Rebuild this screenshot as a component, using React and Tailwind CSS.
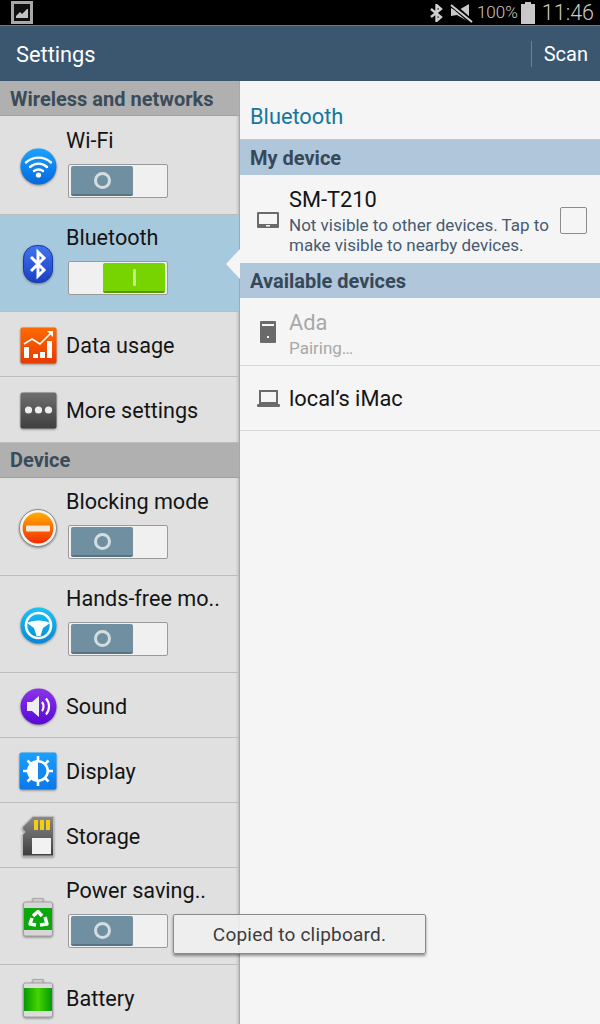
import React from 'react';

const Toggle = ({ on }) => (
  <div className="relative flex h-[34px] w-[100px] items-center rounded-[2px] border border-[#9a9a9a] bg-[#f0f0f0] p-[1px]">
    {on ? (
      <div className="ml-auto mr-[1px] flex h-[30px] w-[62px] items-center justify-center rounded-[2px] border-b-2 border-[#5c9400] bg-[#78d400]">
        <div className="h-[17px] w-[3px] rounded-[1px] bg-[#c4e88a]" />
      </div>
    ) : (
      <div className="ml-[1px] flex h-[30px] w-[62px] items-center justify-center rounded-[2px] border-b-2 border-[#587484] bg-[#7090a2]">
        <div className="h-[17px] w-[17px] rounded-full border-[3px] border-[#d4dde0]" />
      </div>
    )}
  </div>
);

const WifiIcon = () => (
  <svg width="37" height="37" viewBox="0 0 37 37">
    <defs>
      <linearGradient id="wifiBg" x1="0" y1="0" x2="0" y2="1">
        <stop offset="0" stopColor="#1aa3ff" />
        <stop offset="1" stopColor="#0568dc" />
      </linearGradient>
    </defs>
    <circle cx="18.5" cy="18.5" r="18" fill="url(#wifiBg)" />
    <g fill="none" stroke="#fff" strokeWidth="2.4" strokeLinecap="round">
      <path d="M6 14.5 C13 8 24 8 31 14.5" />
      <path d="M10 19 C15 14.5 22 14.5 27 19" />
      <path d="M14 23 C16.5 21 20.5 21 23 23" />
    </g>
    <circle cx="18.5" cy="27" r="2.6" fill="#fff" />
  </svg>
);

const BluetoothIcon = () => (
  <svg width="30" height="38" viewBox="0 0 30 38">
    <defs>
      <linearGradient id="btBg" x1="0" y1="0" x2="0" y2="1">
        <stop offset="0" stopColor="#3f74f0" />
        <stop offset="1" stopColor="#1c3fc4" />
      </linearGradient>
    </defs>
    <rect x="0.5" y="0.5" width="29" height="37" rx="13" fill="url(#btBg)" stroke="#1a3aa8" />
    <path d="M8 12 L21 25 L15 31 L15 7 L21 13 L8 26" fill="none" stroke="#fff" strokeWidth="3" />
  </svg>
);

const DataIcon = () => (
  <svg width="37" height="37" viewBox="0 0 37 37">
    <defs>
      <linearGradient id="dataBg" x1="0" y1="0" x2="0" y2="1">
        <stop offset="0" stopColor="#ff6a00" />
        <stop offset="1" stopColor="#e83a00" />
      </linearGradient>
    </defs>
    <rect x="0.5" y="0.5" width="36" height="36" rx="2" fill="url(#dataBg)" />
    <path d="M4 17 L12 12 L20 17 L31 6" fill="none" stroke="#fff" strokeWidth="1.6" />
    <path d="M27 4 L33 4 L33 10 Z" fill="#fff" />
    <rect x="4" y="20" width="5" height="11" fill="#fff" />
    <rect x="13" y="27" width="5" height="4" fill="#fff" />
    <rect x="20" y="25" width="5" height="6" fill="#fff" />
    <rect x="27" y="14" width="5" height="17" fill="#fff" />
  </svg>
);

const MoreIcon = () => (
  <svg width="37" height="37" viewBox="0 0 37 37">
    <defs>
      <linearGradient id="moreBg" x1="0" y1="0" x2="0" y2="1">
        <stop offset="0" stopColor="#6e6e6e" />
        <stop offset="1" stopColor="#404040" />
      </linearGradient>
    </defs>
    <rect x="0.5" y="0.5" width="36" height="36" rx="2" fill="url(#moreBg)" />
    <circle cx="8.5" cy="18" r="3.6" fill="#eee" />
    <circle cx="18.5" cy="18" r="3.6" fill="#eee" />
    <circle cx="28.5" cy="18" r="3.6" fill="#eee" />
  </svg>
);

const BlockIcon = () => (
  <svg width="38" height="38" viewBox="0 0 38 38">
    <defs>
      <linearGradient id="blockBg" x1="0" y1="0" x2="0" y2="1">
        <stop offset="0" stopColor="#ffb000" />
        <stop offset="1" stopColor="#f52a00" />
      </linearGradient>
    </defs>
    <circle cx="19" cy="19" r="18.5" fill="#f4f4f4" stroke="#8a8a8a" />
    <circle cx="19" cy="19" r="15.500" fill="url(#blockBg)" />
    <rect x="7" y="16.500" width="24" height="6" rx="1" fill="#f4e8d8" />
  </svg>
);

const WheelIcon = () => (
  <svg width="37" height="37" viewBox="0 0 37 37">
    <defs>
      <linearGradient id="wheelBg" x1="0" y1="0" x2="0" y2="1">
        <stop offset="0" stopColor="#1cc4f4" />
        <stop offset="1" stopColor="#0488d8" />
      </linearGradient>
    </defs>
    <circle cx="18.5" cy="18.5" r="18" fill="url(#wheelBg)" />
    <circle cx="18.5" cy="18.5" r="12.500" fill="none" stroke="#fff" strokeWidth="2.6" />
    <path d="M7 16 C12 12.500 25 12.500 30 16 L23 21 L20.500 29 L16.500 29 L14 21 Z" fill="#fff" />
  </svg>
);

const SoundIcon = () => (
  <svg width="37" height="37" viewBox="0 0 37 37">
    <defs>
      <linearGradient id="soundBg" x1="0" y1="0" x2="0" y2="1">
        <stop offset="0" stopColor="#8a34e8" />
        <stop offset="1" stopColor="#5a08d8" />
      </linearGradient>
    </defs>
    <circle cx="18.5" cy="18.5" r="18" fill="url(#soundBg)" />
    <path d="M7 14 L12 14 L19 8 L19 29 L12 23 L7 23 Z" fill="#eee" />
    <path d="M22 14 C24 16.500 24 20.500 22 23" fill="none" stroke="#fff" strokeWidth="2.2" />
    <path d="M26 10.500 C30 15 30 22 26 26.500" fill="none" stroke="#fff" strokeWidth="2.2" />
  </svg>
);

const DisplayIcon = () => (
  <svg width="38" height="38" viewBox="0 0 38 38">
    <defs>
      <linearGradient id="dispBg" x1="0" y1="0" x2="0" y2="1">
        <stop offset="0" stopColor="#1aa0ff" />
        <stop offset="1" stopColor="#0a78e8" />
      </linearGradient>
    </defs>
    <rect x="0.5" y="0.5" width="37" height="37" rx="2" fill="url(#dispBg)" />
    <g stroke="#fff" strokeWidth="2.6">
      <path d="M19 4 V34 M4 19 H34 M8.500 8.500 L29.500 29.500 M29.500 8.500 L8.500 29.500" />
    </g>
    <circle cx="19" cy="19" r="11" fill="#fff" />
    <path d="M19 10.500 A8.500 8.500 0 0 1 19 27.500 Z" fill="#1488f0" />
  </svg>
);

const StorageIcon = () => (
  <svg width="34" height="41" viewBox="0 0 34 41">
    <defs>
      <linearGradient id="storeBg" x1="0" y1="0" x2="0" y2="1">
        <stop offset="0" stopColor="#8a8a8a" />
        <stop offset="1" stopColor="#3e3e3e" />
      </linearGradient>
    </defs>
    <path d="M12 0.500 L32.500 0.500 L32.500 40 L1.500 40 L1.500 19 L4 16 L1.500 13 L1.500 11 Z" fill="url(#storeBg)" stroke="#bbb" />
    <rect x="13" y="4" width="4" height="10" fill="#f4cc10" />
    <rect x="19" y="4" width="4" height="10" fill="#f4cc10" />
    <rect x="25" y="4" width="4" height="10" fill="#f4cc10" />
    <rect x="11" y="22" width="19" height="16" fill="#f2f2f2" />
  </svg>
);

const PowerIcon = () => (
  <svg width="30" height="39" viewBox="0 0 30 39">
    <rect x="10" y="0.500" width="10" height="4" fill="#ccc" stroke="#aaa" />
    <rect x="0.5" y="4" width="29" height="34" rx="2" fill="#d6d6d6" stroke="#a0a0a0" />
    <rect x="1" y="10" width="28" height="22" fill="#0aa80a" />
    <g fill="none" stroke="#fff" strokeWidth="3.4" strokeLinejoin="round">
      <path d="M10 18 L15 13.500 L19 18" />
      <path d="M22 19 L24 26 L17 27" />
      <path d="M13 27 L7 26 L9 20" />
    </g>
  </svg>
);

const BatteryIcon = () => (
  <svg width="30" height="39" viewBox="0 0 30 39">
    <defs>
      <linearGradient id="batBg" x1="0" y1="0" x2="1" y2="0">
        <stop offset="0" stopColor="#059a05" />
        <stop offset="0.5" stopColor="#44d400" />
        <stop offset="1" stopColor="#059a05" />
      </linearGradient>
    </defs>
    <rect x="10" y="0.500" width="10" height="4" fill="#ccc" stroke="#aaa" />
    <rect x="0.5" y="4" width="29" height="34" rx="2" fill="#dcdcdc" stroke="#a0a0a0" />
    <rect x="1" y="9" width="28" height="23" fill="url(#batBg)" />
  </svg>
);

const Row = ({ icon, label, height, toggle, on, active, top = '12px', textTop = '4px' }) => (
  <div
    className={`relative flex shrink-0 border-b border-[#bcbcbc] ${toggle ? 'items-start' : 'items-center'} ${active ? 'bg-[#a7c9dd]' : ''}`}
    style={{ height }}
  >
    <div className="flex h-full w-[66px] shrink-0 items-center justify-center pl-[10px] pt-[2px] drop-shadow-[0_1px_1px_rgba(0,0,0,0.4)]">
      {icon}
    </div>
    {toggle ? (
      <div className="flex flex-col" style={{ paddingTop: top }}>
        <span className="text-[21.6px] leading-[26px] text-[#141414]">{label}</span>
        <div className="ml-[2px] mt-[10px]">
          <Toggle on={on} />
        </div>
      </div>
    ) : (
      <span className="text-[21.6px] leading-none text-[#141414]" style={{ paddingTop: textTop }}>
        {label}
      </span>
    )}
  </div>
);

const SideHeader = ({ children, h, textTop = '2px' }) => (
  <div
    className="flex shrink-0 items-center border-b border-[#a0a0a0] bg-[#b0b0b0] pl-[10px] text-[20px] font-bold text-[#3a4c59]"
    style={{ height: h, paddingTop: textTop }}
  >
    {children}
  </div>
);

const BlueHeader = ({ children, h }) => (
  <div
    className="flex shrink-0 items-center bg-[#b0c6da] pl-[10px] text-[20px] font-bold text-[#36495a]"
    style={{ height: h }}
  >
    {children}
  </div>
);

export default function App() {
  return (
    <div className="relative flex h-[1024px] w-[600px] flex-col overflow-hidden bg-[#f5f5f5] font-['Roboto',sans-serif]">
      {/* status bar */}
      <div className="flex h-[25px] shrink-0 items-center bg-black text-[#c8c8c8]">
        <div className="ml-[11px] flex h-[23px] w-[22px] items-end justify-center border-[3px] border-[#a8a8a8] bg-[#111] pb-[3px]">
          <svg width="12" height="9" viewBox="0 0 12 9">
            <path d="M0 9 L0 7 L4 3 L6 5 L11 0 L12 0 L12 9 Z" fill="#c4c4c4" />
          </svg>
        </div>
        <div className="ml-auto flex items-center">
          <svg width="13" height="18" viewBox="0 0 13 18">
            <path d="M1 5 L11 13 L6.500 17 L6.500 1 L11 5 L1 13" fill="none" stroke="#d0d0d0" strokeWidth="2.4" />
          </svg>
          <svg className="ml-[7px]" width="23" height="20" viewBox="0 0 23 20">
            <path d="M1 5 L7 8 L19 1 L19 19 L7 12 L1 13 Z" fill="#c8c8c8" />
            <path d="M0 0 L23 20" stroke="#000" strokeWidth="5" />
            <path d="M1 2 L22 19" stroke="#d0d0d0" strokeWidth="2" />
          </svg>
          <span className="ml-[4px] text-[17px] font-light leading-none">100%</span>
          <div className="relative ml-[3px] mt-[2px] h-[20px] w-[14px] bg-[#c8c8c8]">
            <div className="absolute left-[4px] top-[-2px] h-[2px] w-[6px] bg-[#c8c8c8]" />
          </div>
          <span className="ml-[7px] mr-[6px] text-[21.5px] font-light leading-none">11:46</span>
        </div>
      </div>

      {/* action bar */}
      <div className="flex h-[56px] shrink-0 items-center border-t border-[#5d7d97] bg-[#3b566f] text-white">
        <span className="ml-[16px] pt-[4px] text-[21.8px]">Settings</span>
        <div className="ml-auto h-[26px] w-px bg-[#6b8297]" />
        <span className="ml-[12px] mr-[12px] text-[20px] leading-none">Scan</span>
      </div>

      <div className="flex min-h-0 flex-1">
        {/* left list */}
        <div className="relative flex w-[240px] shrink-0 flex-col overflow-hidden border-r border-[#a8a8a8] bg-[#e0e0e0] shadow-[inset_-3px_0_3px_-2px_rgba(0,0,0,0.2)]">
          <SideHeader h="35px">Wireless and networks</SideHeader>
          <Row icon={<WifiIcon />} label="Wi-Fi" height="99px" toggle on={false} />
          <Row icon={<BluetoothIcon />} label="Bluetooth" height="97px" toggle on active top="10px" />
          <Row icon={<DataIcon />} label="Data usage" height="65px" />
          <Row icon={<MoreIcon />} label="More settings" height="66px" textTop="2px" />
          <SideHeader h="35px" textTop="0px">Device</SideHeader>
          <Row icon={<BlockIcon />} label="Blocking mode" height="98px" toggle on={false} top="11px" />
          <Row icon={<WheelIcon />} label="Hands-free mo.." height="97px" toggle on={false} top="10px" />
          <Row icon={<SoundIcon />} label="Sound" height="65px" />
          <Row icon={<DisplayIcon />} label="Display" height="65px" />
          <Row icon={<StorageIcon />} label="Storage" height="65px" />
          <Row icon={<PowerIcon />} label="Power saving.." height="97px" toggle on={false} top="10px" />
          <Row icon={<BatteryIcon />} label="Battery" height="65px" />
        </div>

        {/* right pane */}
        <div className="relative flex min-w-0 flex-1 flex-col">
          <div className="absolute left-[-14px] top-[168px] h-0 w-0 border-y-[15px] border-r-[14px] border-y-transparent border-r-[#f5f5f5]" />
          <div className="flex h-[59px] shrink-0 items-end border-b border-[#c4c8cc] pb-[8px] pl-[10px] text-[21.8px] leading-[28px] text-[#1477a0]">
            Bluetooth
          </div>
          <BlueHeader h="35px">My device</BlueHeader>
          <div className="flex h-[88px] shrink-0 items-center pr-[13px] pt-[3px]">
            <div className="flex w-[49px] shrink-0 justify-center pl-[7px]">
              <svg width="22" height="17" viewBox="0 0 22 17">
                <rect x="0" y="0" width="22" height="16" rx="1" fill="#6a6a6a" />
                <rect x="2" y="2" width="18" height="10" fill="#f5f5f5" />
                <rect x="9" y="13" width="4" height="1.500" fill="#f5f5f5" />
              </svg>
            </div>
            <div className="flex min-w-0 flex-1 flex-col">
              <span className="text-[21.8px] leading-[26px] text-[#141414]">SM-T210</span>
              <span className="mt-[2px] text-[17px] leading-[20px] text-[#475a70]">
                Not visible to other devices. Tap to make visible to nearby devices.
              </span>
            </div>
            <div className="ml-[10px] h-[27px] w-[27px] shrink-0 rounded-[2px] border border-[#8c8c8c]" />
          </div>
          <BlueHeader h="35px">Available devices</BlueHeader>
          <div className="flex h-[68px] shrink-0 items-center border-b border-[#d8d8d8]">
            <div className="flex w-[49px] shrink-0 justify-center pl-[7px]">
              <svg width="16" height="22" viewBox="0 0 16 22">
                <rect x="0" y="0" width="16" height="22" rx="1" fill="#6a6a6a" />
                <rect x="2" y="3" width="12" height="2" fill="#f5f5f5" />
                <rect x="7" y="15" width="2" height="2" fill="#f5f5f5" />
              </svg>
            </div>
            <div className="flex flex-col pt-[4px]">
              <span className="text-[21.8px] leading-[26px] text-[#a8a8a8]">Ada</span>
              <span className="mt-[2px] text-[17px] leading-[20px] text-[#a8a8a8]">Pairing…</span>
            </div>
          </div>
          <div className="flex h-[65px] shrink-0 items-center border-b border-[#d8d8d8]">
            <div className="flex w-[49px] shrink-0 justify-center pl-[7px]">
              <svg width="23" height="17" viewBox="0 0 23 17">
                <rect x="3" y="1" width="17" height="12" fill="none" stroke="#6a6a6a" strokeWidth="2" />
                <rect x="0" y="14" width="23" height="3" rx="1" fill="#6a6a6a" />
              </svg>
            </div>
            <span className="pt-[2px] text-[21.8px] text-[#141414]">local’s iMac</span>
          </div>
        </div>
      </div>

      {/* toast */}
      <div className="absolute left-[173px] top-[914px] flex h-[40px] w-[253px] items-center justify-center rounded-[2px] border border-[#8a8a8a] bg-[#f0f0f0]/90 pt-[2px] text-[19px] tracking-[0.2px] text-[#3c3c3c] shadow-[0_2px_3px_rgba(0,0,0,0.4)]">
        Copied to clipboard.
      </div>
    </div>
  );
}
